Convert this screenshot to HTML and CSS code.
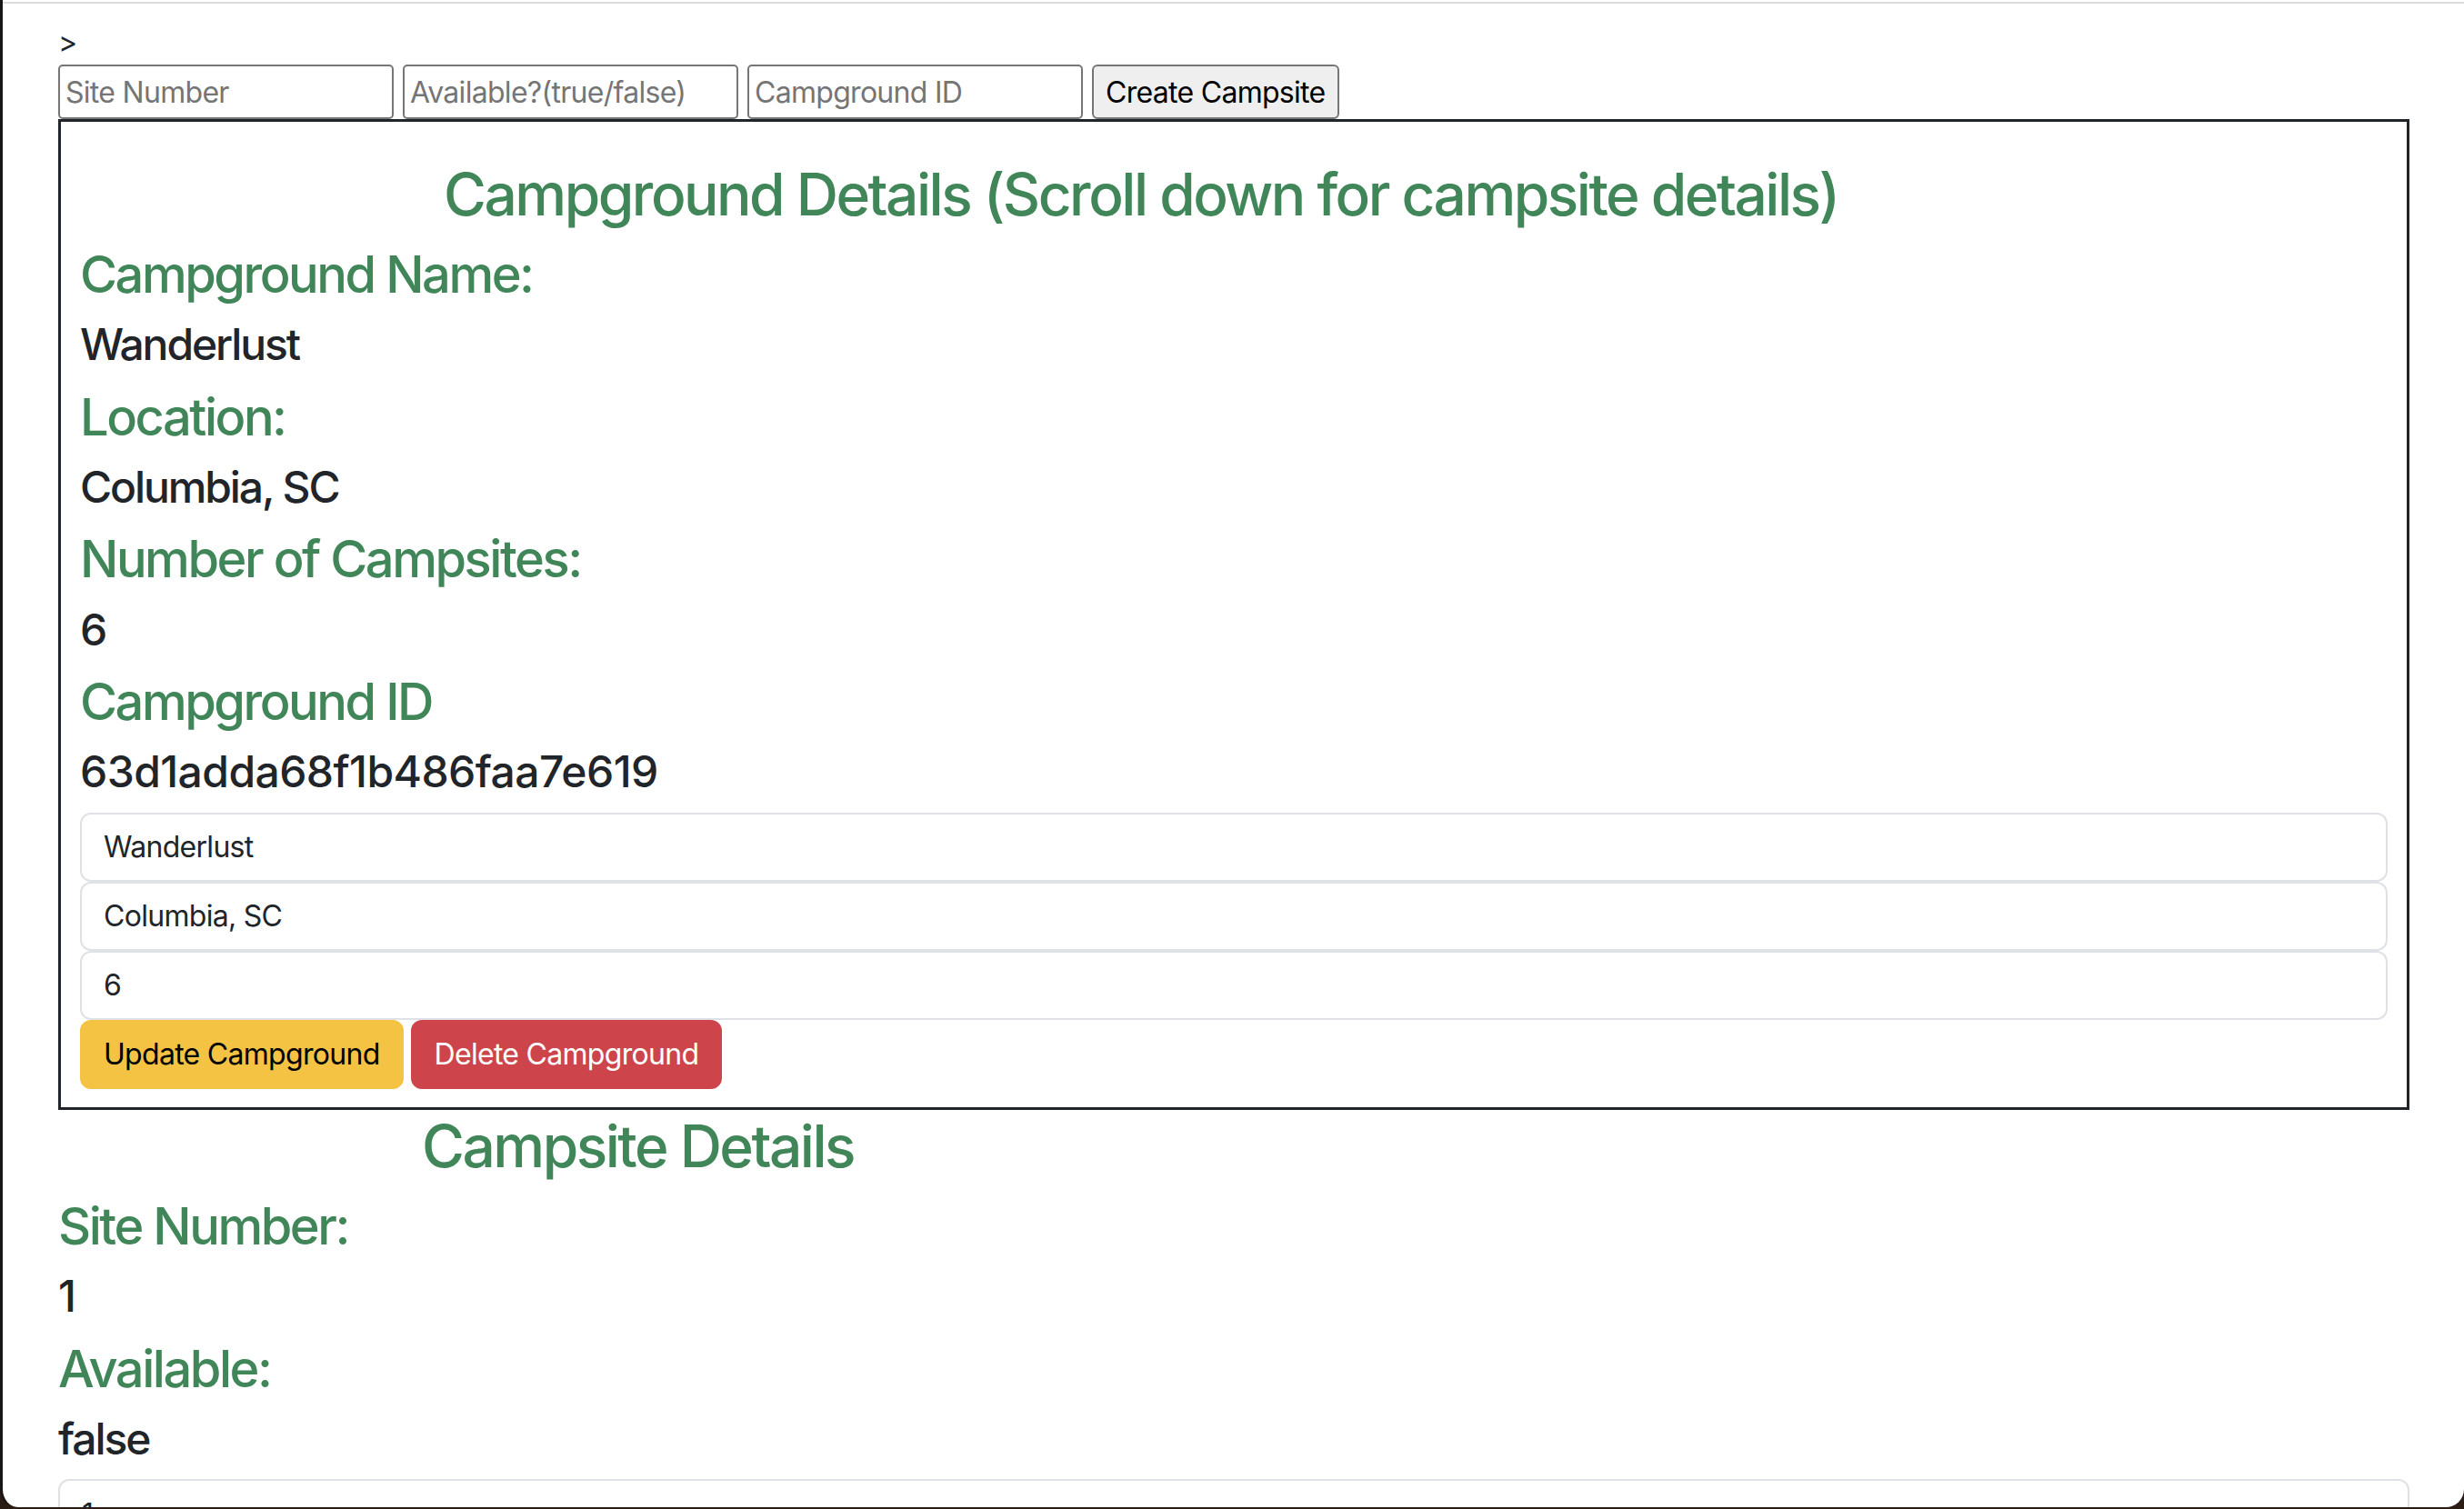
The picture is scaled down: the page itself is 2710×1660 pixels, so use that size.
FILE: index.html
```html
<!DOCTYPE html>
<html lang="en">
<head>
<meta charset="utf-8">
<title>Campground Details</title>
<link rel="stylesheet" href="styles.css">
</head>
<body>
<div class="window">
  <div class="topline"></div>
  <div class="page">
    <div class="stray">&gt;</div>
    <form class="create-row">
      <input class="field" type="text" placeholder="Site Number">
      <input class="field" type="text" placeholder="Available?(true/false)">
      <input class="field" type="text" placeholder="Campground ID">
      <button class="create-btn" type="button">Create Campsite</button>
    </form>
    <section class="campground">
      <h2 class="title">Campground Details (Scroll down for campsite details)</h2>
      <h3 class="label">Campground Name:</h3>
      <h4 class="value">Wanderlust</h4>
      <h3 class="label">Location:</h3>
      <h4 class="value">Columbia, SC</h4>
      <h3 class="label">Number of Campsites:</h3>
      <h4 class="value">6</h4>
      <h3 class="label">Campground ID</h3>
      <h4 class="value value-id">63d1adda68f1b486faa7e619</h4>
      <input class="form-control" type="text" value="Wanderlust">
      <input class="form-control" type="text" value="Columbia, SC">
      <input class="form-control" type="text" value="6">
      <div class="actions">
        <button class="btn btn-warning" type="button">Update Campground</button>
        <button class="btn btn-danger" type="button">Delete Campground</button>
      </div>
    </section>
    <section class="campsite">
      <h2 class="title">Campsite Details</h2>
      <h3 class="label">Site Number:</h3>
      <h4 class="value">1</h4>
      <h3 class="label">Available:</h3>
      <h4 class="value">false</h4>
      <input class="form-control" type="text" value="1">
    </section>
  </div>
</div>
</body>
</html>
```

FILE: styles.css
```css
html, body {
  margin: 0;
  height: 100%;
}

body {
  background: #2b1c14;
  overflow: hidden;
  font-family: Inter, "Liberation Sans", sans-serif;
  font-size: 32px;
  line-height: 1.5;
  color: #212529;
}

.window {
  box-sizing: border-box;
  height: 1658px;
  background: #ffffff;
  border-left: 3px solid #161616;
  border-radius: 0 0 20px 20px;
  overflow: hidden;
}

.topline {
  margin-top: 2px;
  height: 2px;
  background: #dcdcdc;
}

.page {
  padding: 19px 60px 0 61px;
}

.stray {
  height: 48px;
  line-height: 48px;
}

.create-row {
  display: flex;
  gap: 10px;
  height: 60px;
  margin: 0;
}

.field {
  box-sizing: border-box;
  width: 369px;
  height: 60px;
  border: 2px solid #767676;
  border-radius: 5px;
  padding: 2px 6px;
  font-family: Inter, "Liberation Sans", sans-serif;
  font-size: 32px;
  letter-spacing: -0.022em;
  color: #000;
  background: #fff;
}

.field::placeholder {
  color: #757575;
}

.create-btn {
  box-sizing: border-box;
  height: 60px;
  border: 2px solid #767676;
  border-radius: 6px;
  background: #efefef;
  padding: 0 13px;
  white-space: nowrap;
  font-family: Inter, "Liberation Sans", sans-serif;
  font-size: 32px;
  letter-spacing: -0.022em;
  color: #000;
}

.campground {
  border: 3px solid #212529;
  padding: 42px 21px 20px;
}

.title {
  margin: 0 0 14px 400px;
  font-size: 64px;
  line-height: 76.8px;
  font-weight: 500;
  letter-spacing: -0.039em;
  color: #408658;
}

.campsite .title {
  margin-top: 2px;
}

.label {
  margin: 0 0 14px;
  padding-top: 2px;
  font-size: 56px;
  line-height: 67.2px;
  font-weight: 500;
  letter-spacing: -0.044em;
  color: #408658;
}

.value {
  margin: 0 0 16px;
  font-size: 48px;
  line-height: 57.6px;
  font-weight: 500;
  letter-spacing: -0.044em;
  color: #212529;
}

.value-id {
  letter-spacing: -0.012em;
}

.form-control {
  display: block;
  box-sizing: border-box;
  width: 100%;
  height: 76px;
  margin: 0;
  padding: 12px 24px;
  border: 2px solid #dee2e6;
  border-radius: 12px;
  background: #fff;
  font-family: Inter, "Liberation Sans", sans-serif;
  font-size: 32px;
  line-height: 48px;
  letter-spacing: -0.022em;
  color: #212529;
}

.actions {
  display: flex;
  gap: 8px;
}

.btn {
  box-sizing: border-box;
  height: 76px;
  padding: 12px 24px;
  border: 2px solid transparent;
  border-radius: 12px;
  font-family: Inter, "Liberation Sans", sans-serif;
  font-size: 32px;
  line-height: 48px;
  font-weight: 400;
  letter-spacing: -0.022em;
}

.btn-warning {
  background: #f5c344;
  border-color: #f5c344;
  color: #000;
}

.btn-danger {
  background: #cd454b;
  border-color: #cd454b;
  color: #fff;
}
```
